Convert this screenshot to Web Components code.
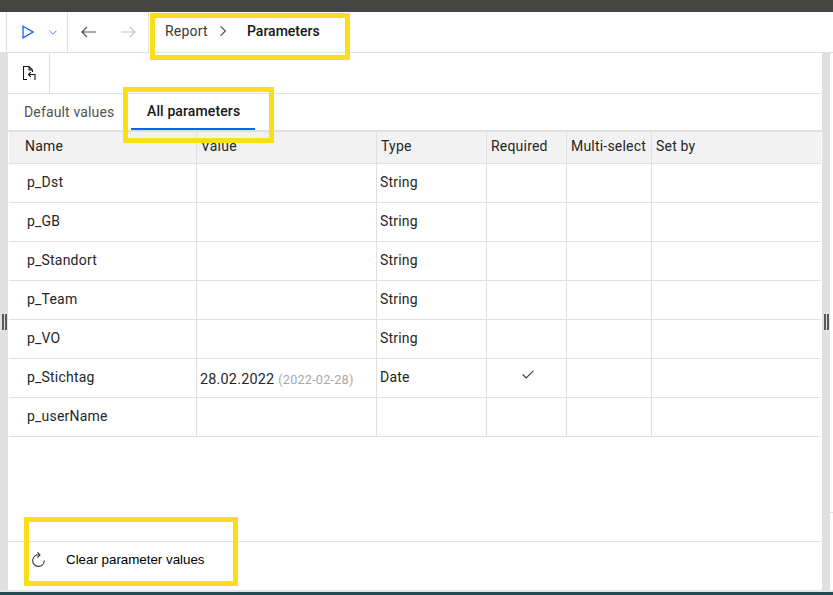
<!DOCTYPE html>
<html>
<head>
<meta charset="utf-8">
<title>Parameters</title>
<style>
html, body { margin: 0; padding: 0; height: 100%; background: #fff; overflow: hidden; }
body { font-family: Roboto, "Noto Sans", sans-serif; letter-spacing: .2px; color: #161616; }
</style>
</head>
<body>
<rp-app>
  <rp-toolbar slot="toolbar">
    <rp-breadcrumb parent="Report" current="Parameters"></rp-breadcrumb>
  </rp-toolbar>
  <rp-subbar slot="panel"></rp-subbar>
  <rp-tabs slot="panel" first="Default values" second="All parameters"></rp-tabs>
  <rp-table slot="panel">
    <rp-row name="p_Dst" type="String"></rp-row>
    <rp-row name="p_GB" type="String"></rp-row>
    <rp-row name="p_Standort" type="String"></rp-row>
    <rp-row name="p_Team" type="String"></rp-row>
    <rp-row name="p_VO" type="String"></rp-row>
    <rp-row name="p_Stichtag" type="Date" value="28.02.2022" raw="(2022-02-28)" required></rp-row>
    <rp-row name="p_userName"></rp-row>
  </rp-table>
  <rp-footer slot="panel" label="Clear parameter values"></rp-footer>
  <rp-mark slot="marks" x="150" y="13" w="200" h="47"></rp-mark>
  <rp-mark slot="marks" x="123" y="87" w="151" h="56"></rp-mark>
  <rp-mark slot="marks" x="24" y="517" w="214" h="69"></rp-mark>
</rp-app>

<script>
const COLS = '188px 180px 110px 80px 85px 1fr'
const LINE = '#e0e0e0'

class RpApp extends HTMLElement {
  constructor() {
    super()
    const shadow = this.attachShadow({mode: 'open'})
    shadow.innerHTML = `
<style>
:host {
  position: relative;
  display: grid;
  grid-template-rows: 12px 41px 537px 2px 3px;
  width: 833px;
  height: 595px;
  overflow: hidden;
}
.top { background: #454543; }
.body { display: grid; grid-template-columns: 8px 814px 8px 3px; min-height: 0; }
.gutter {
  background: ${LINE};
  display: flex;
  align-items: center;
  justify-content: center;
}
.grip { width: 5px; height: 16px; border-left: 2px solid #5a5a5a; border-right: 2px solid #5a5a5a; box-sizing: border-box; }
.panel { display: flex; flex-direction: column; min-height: 0; }
.edge { height: 459px; border-bottom: 1px solid ${LINE}; }
.rule { background: #e6e6e6; }
.base { background: #234a55; }
</style>
<div class="top"></div>
<slot name="toolbar"></slot>
<div class="body">
  <div class="gutter"><div class="grip"></div></div>
  <div class="panel"><slot name="panel"></slot></div>
  <div class="gutter"><div class="grip"></div></div>
  <div><div class="edge"></div></div>
</div>
<div class="rule"></div>
<div class="base"></div>
<slot name="marks"></slot>
`
  }
}
customElements.define('rp-app', RpApp)

class RpToolbar extends HTMLElement {
  constructor() {
    super()
    const shadow = this.attachShadow({mode: 'open'})
    shadow.innerHTML = `
<style>
:host {
  display: flex;
  box-sizing: border-box;
  height: 41px;
  padding-left: 6px;
  border-bottom: 1px solid ${LINE};
  background: #fff;
}
.cell { display: flex; align-items: center; border-left: 1px solid ${LINE}; box-sizing: border-box; height: 40px; }
.run { width: 61px; padding-left: 15px; gap: 15px; }
.nav { width: 81px; padding-left: 13px; gap: 25px; }
.end { border-left: 1px solid ${LINE}; height: 40px; }
svg { display: block; fill: none; }
</style>
<div class="cell run">
  <svg width="12" height="14" viewBox="0 0 12 14" stroke="#0f62fe" stroke-width="1.3"><path d="M1 1.2 L11 7 L1 12.8 Z"/></svg>
  <svg width="8" height="5" viewBox="0 0 8 5" stroke="#4589ff" stroke-width="1"><path d="M.4 .6 L4 4.2 L7.6 .6"/></svg>
</div>
<div class="cell nav">
  <svg width="15" height="12" viewBox="0 0 15 12" stroke="#525252" stroke-width="1.2"><path d="M15 6 H1 M6 1 L1 6 L6 11"/></svg>
  <svg width="15" height="12" viewBox="0 0 15 12" stroke="#c6c6c6" stroke-width="1.2"><path d="M0 6 H14 M9 1 L14 6 L9 11"/></svg>
</div>
<div class="end"></div>
<slot></slot>
`
  }
}
customElements.define('rp-toolbar', RpToolbar)

class RpBreadcrumb extends HTMLElement {
  constructor() {
    super()
    const shadow = this.attachShadow({mode: 'open'})
    shadow.innerHTML = `
<style>
:host {
  display: flex;
  align-items: center;
  height: 38px;
  padding-left: 16px;
  font-size: 14px;
}
.parent { color: #393939; width: 55px; }
svg { display: block; fill: none; margin-right: 21px; }
.current { font-weight: 500; letter-spacing: 0; }
</style>
<span class="parent">${this.getAttribute('parent')}</span>
<svg width="6" height="10" viewBox="0 0 6 10" stroke="#525252" stroke-width="1.2"><path d="M.6 .4 L5.4 5 L.6 9.6"/></svg>
<span class="current">${this.getAttribute('current')}</span>
`
  }
}
customElements.define('rp-breadcrumb', RpBreadcrumb)

class RpSubbar extends HTMLElement {
  constructor() {
    super()
    const shadow = this.attachShadow({mode: 'open'})
    shadow.innerHTML = `
<style>
:host {
  display: block;
  height: 41px;
  box-sizing: border-box;
  border-bottom: 1px solid ${LINE};
}
.btn {
  display: flex;
  align-items: center;
  box-sizing: border-box;
  width: 42px;
  height: 40px;
  padding-left: 15px;
  border-right: 1px solid ${LINE};
}
svg { display: block; fill: none; }
</style>
<div class="btn">
  <svg width="13" height="15" viewBox="0 0 13 15" stroke="#161616" stroke-width="1.1">
    <path d="M4 13.5 H.5 V.5 H6 L9.5 4 V6 M6 .5 V4 H9.5"/>
    <path d="M12 14 V8.5 H5.5 M7.8 6.2 L5.5 8.5 L7.8 10.8"/>
  </svg>
</div>
`
  }
}
customElements.define('rp-subbar', RpSubbar)

class RpTabs extends HTMLElement {
  constructor() {
    super()
    const shadow = this.attachShadow({mode: 'open'})
    shadow.innerHTML = `
<style>
:host {
  display: flex;
  box-sizing: border-box;
  height: 38px;
  padding-left: 16px;
  border-bottom: 2px solid ${LINE};
  font-size: 14px;
}
.tab { display: flex; align-items: center; height: 36px; padding-bottom: 1px; box-sizing: border-box; color: #525252; width: 107px; letter-spacing: .15px; }
.on {
  width: 124px;
  padding-left: 16px;
  color: #161616;
  font-weight: 500;
  letter-spacing: .12px;
  border-bottom: 2px solid #0f62fe;
}
</style>
<div class="tab">${this.getAttribute('first')}</div>
<div class="tab on">${this.getAttribute('second')}</div>
`
  }
}
customElements.define('rp-tabs', RpTabs)

class RpTable extends HTMLElement {
  constructor() {
    super()
    const shadow = this.attachShadow({mode: 'open'})
    shadow.innerHTML = `
<style>
:host {
  display: block;
  flex: 1;
  margin-left: 1px;
  margin-right: 1px;
  font-size: 14px;
}
.head {
  display: grid;
  grid-template-columns: ${COLS};
  height: 32px;
  box-sizing: border-box;
  background: #f2f2f2;
  border-bottom: 1px solid ${LINE};
  color: #262626;
}
.head div {
  display: flex;
  align-items: center;
  padding: 0 0 3px 4px;
  border-right: 1px solid ${LINE};
  min-width: 0;
  white-space: nowrap;
}
.head div:first-child { padding-left: 16px; }
.head div:last-child { border-right: 0; }
</style>
<div class="head">
  <div>Name</div><div>Value</div><div>Type</div><div>Required</div><div>Multi-select</div><div>Set by</div>
</div>
<slot></slot>
`
  }
}
customElements.define('rp-table', RpTable)

class RpRow extends HTMLElement {
  constructor() {
    super()
    const shadow = this.attachShadow({mode: 'open'})
    const value = this.getAttribute('value')
    const raw = this.getAttribute('raw')
    const check = this.hasAttribute('required')
      ? `<svg width="12" height="9" viewBox="0 0 12 9" fill="none" stroke="#393939" stroke-width="1.1"><path d="M.7 4.5 L4.2 8 L11.3 .8"/></svg>`
      : ''
    shadow.innerHTML = `
<style>
:host {
  display: grid;
  grid-template-columns: ${COLS};
  height: 39px;
  box-sizing: border-box;
  border-bottom: 1px solid ${LINE};
  color: #262626;
}
.c {
  display: flex;
  align-items: center;
  padding-left: 3px;
  border-right: 1px solid ${LINE};
  white-space: nowrap;
  min-width: 0;
  padding-bottom: 2px;
}
.name { padding-left: 18px; }
.c:last-child { border-right: 0; }
.val { padding-top: 2px; padding-bottom: 0; font-size: 14.4px; }
.raw { margin-left: 4px; font-size: 12.7px; color: #a8a8a8; padding-top: 1px; }
.req { justify-content: center; padding: 0 0 8px 2px; }
</style>
<div class="c name">${this.getAttribute('name')}</div>
<div class="c ${value ? 'val' : ''}">${value || ''}${raw ? `<span class="raw">${raw}</span>` : ''}</div>
<div class="c">${this.getAttribute('type') || ''}</div>
<div class="c req">${check}</div>
<div class="c"></div>
<div class="c"></div>
`
  }
}
customElements.define('rp-row', RpRow)

class RpFooter extends HTMLElement {
  constructor() {
    super()
    const shadow = this.attachShadow({mode: 'open'})
    shadow.innerHTML = `
<style>
:host {
  display: flex;
  align-items: center;
  box-sizing: border-box;
  height: 49px;
  padding: 0 0 13px 24px;
  border-top: 1px solid ${LINE};
  font: 13.333px "Liberation Sans", Arial, sans-serif;
  letter-spacing: 0;
  color: #000;
}
svg { display: block; fill: none; margin-right: 21px; }
</style>
<svg width="13" height="15" viewBox="0 0 13 15" stroke="#393939" stroke-width="1.1">
  <path d="M7.6 2.9 A5.8 5.8 0 1 0 12.3 8.6"/>
  <path d="M5.4 .3 L8 2.9 L5.4 5.5"/>
</svg>
<span>${this.getAttribute('label')}</span>
`
  }
}
customElements.define('rp-footer', RpFooter)

// annotation boxes drawn over the screenshot
class RpMark extends HTMLElement {
  constructor() {
    super()
    const shadow = this.attachShadow({mode: 'open'})
    shadow.innerHTML = `
<style>
:host {
  position: absolute;
  box-sizing: border-box;
  border: 5px solid #fbdd19;
  left: ${this.getAttribute('x')}px;
  top: ${this.getAttribute('y')}px;
  width: ${this.getAttribute('w')}px;
  height: ${this.getAttribute('h')}px;
}
</style>
`
  }
}
customElements.define('rp-mark', RpMark)
</script>
</body>
</html>
